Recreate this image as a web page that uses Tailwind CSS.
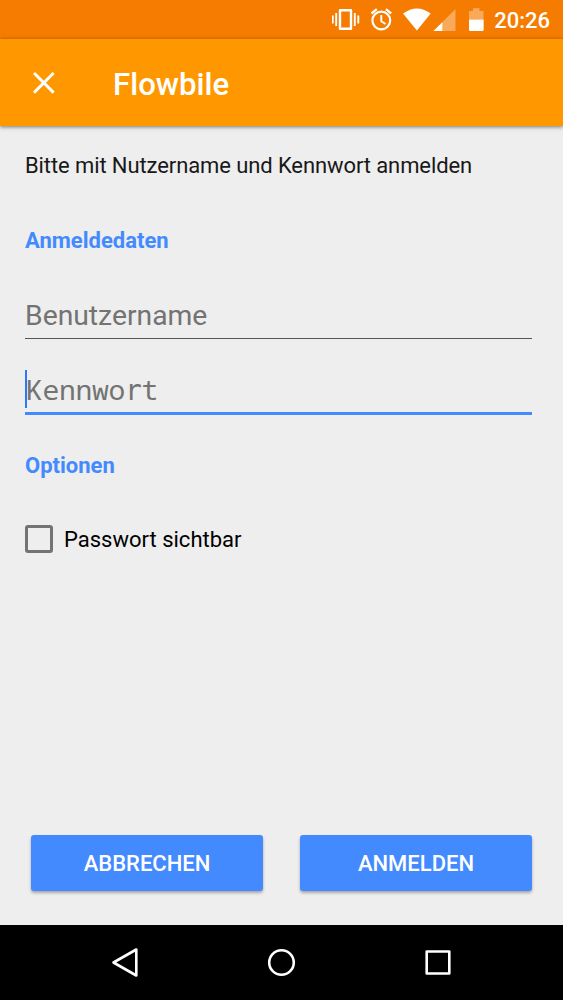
<!DOCTYPE html>
<html lang="de">
<head>
<meta charset="utf-8">
<title>Flowbile</title>
<script src="https://cdn.jsdelivr.net/npm/@tailwindcss/browser@4"></script>
</head>
<body class="bg-[#eeeeee]">
<div class="w-[563px] h-[1000px] flex flex-col overflow-hidden bg-[#eeeeee] font-[Roboto,sans-serif]">
  <div class="h-[39px] shrink-0 bg-[#f57c00] flex items-center justify-end pr-[13px] text-white">
    <svg class="w-[160px] h-[39px] mr-[2px] shrink-0" viewBox="332 0 160 39" fill="none">
      <path d="M340 10.200h11v18.600h-11z" stroke="#fff" stroke-width="2.400" stroke-linejoin="round"/>
      <path d="M336.200 13v13M332.700 15.500v8M354.800 13v13M358.300 15.500v8" stroke="#fff" stroke-width="1.900"/>
      <circle cx="381.300" cy="20.500" r="8.900" stroke="#fff" stroke-width="2.200"/>
      <path d="M381.300 15v6.200l4.200 2.800" stroke="#fff" stroke-width="1.900"/>
      <path d="M371.500 13.500l5.300-4.300M391.200 13.500l-5.300-4.300" stroke="#fff" stroke-width="2.300"/>
      <path d="M403 13.600Q417 3.200 430.700 13.600L416.900 30.400z" fill="#fff"/>
      <path d="M433.500 31L455.500 9v22z" fill="#fff" fill-opacity=".35"/>
      <path d="M433.500 31L442.300 22.200v8.800z" fill="#fff"/>
      <path d="M469 19.500v-8.500h4v-2.700h6.500v2.700h4v8.500z" fill="#fff" fill-opacity=".35"/>
      <path d="M469 19.500h14.600v10.300q0 1.200-1.200 1.200h-12.200q-1.200 0-1.200-1.200z" fill="#fff"/>
    </svg>
    <span class="text-[22px] leading-none font-medium pt-[3px]">20:26</span>
  </div>
  <header class="h-[87px] shrink-0 bg-[#ff9800] flex items-center pl-[33px] text-white shadow-[0_1px_4px_rgba(0,0,0,0.5)]">
    <svg class="w-[22px] h-[22px]" viewBox="0 0 22 22" fill="none" stroke="#fff" stroke-width="2.900"><path d="M1 1l19.600 19.600M20.600 1L1 20.600"/></svg>
    <h1 class="ml-[58px] pt-[4px] text-[31.200px] leading-none font-medium">Flowbile</h1>
  </header>
  <main class="flex-1 flex flex-col pl-[25px] pr-[31px]">
    <p class="mt-[25px] text-[22px] leading-[30px] tracking-[-0.1px] text-[#181818]">Bitte mit Nutzername und Kennwort anmelden</p>
    <h2 class="mt-[45px] text-[22px] leading-[30px] font-bold text-[#448aff]">Anmeldedaten</h2>
    <div class="mt-[39px] pt-[1px] h-[44px] border-b-[1.500px] border-[#555] text-[28.300px] leading-[40px] text-[#737373]">Benutzername</div>
    <div class="mt-[31px] h-[45px] border-b-[3px] border-[#448aff] flex items-start">
      <div class="w-[2px] h-[38px] bg-[#2979ff]"></div>
      <div class="text-[28px] leading-[38px] tracking-[-0.3px] text-[#737373] -ml-[1px] font-['Droid_Sans_Mono','Noto_Sans_Mono','Roboto_Mono','DejaVu_Sans_Mono',monospace]">Kennwo<span class="leading-none font-['DejaVu_Sans_Mono',monospace]">r</span>t</div>
    </div>
    <h2 class="mt-[36px] text-[22px] leading-[30px] font-bold text-[#448aff]">Optionen</h2>
    <label class="mt-[43px] flex items-center text-[22px] leading-[30px] text-black">
      <span class="w-[28px] h-[28px] border-[3px] border-[#737373] rounded-[3px] mr-[11px]"></span><span class="pt-[1px] -mb-[1px]">Passwort sichtbar</span>
    </label>
    <div class="mt-auto mb-[34px] pl-[6px] flex gap-[37px] text-[22px] font-medium text-white">
      <button class="flex-1 h-[56px] rounded-[3px] bg-[#448aff] shadow-[0_2px_3px_rgba(0,0,0,0.3)]">ABBRECHEN</button>
      <button class="flex-1 h-[56px] rounded-[3px] bg-[#448aff] shadow-[0_2px_3px_rgba(0,0,0,0.3)]">ANMELDEN</button>
    </div>
  </main>
  <nav class="h-[75px] shrink-0 bg-black">
    <svg class="w-[563px] h-[75px]" viewBox="0 925 563 75" fill="none" stroke="#fff" stroke-width="2.600" stroke-linejoin="round">
      <path d="M113.500 962.500L136.300 949.500v26z"/>
      <circle cx="281.500" cy="962.500" r="12.300"/>
      <path d="M426.700 951.500h22.600v22h-22.600z"/>
    </svg>
  </nav>
</div>
</body>
</html>
